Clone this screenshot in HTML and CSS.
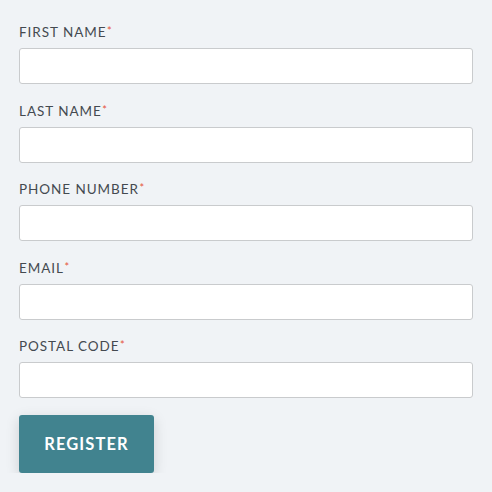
FILE: index.html
```html
<!DOCTYPE html>
<html>
<head>
<meta charset="utf-8">
<link rel="stylesheet" href="styles.css">
</head>
<body>
<form class="form">
  <div class="field">
    <label class="label">FIRST NAME<span class="req">*</span></label>
    <input class="input" type="text">
  </div>
  <div class="field">
    <label class="label">LAST NAME<span class="req">*</span></label>
    <input class="input" type="text">
  </div>
  <div class="field">
    <label class="label">PHONE NUMBER<span class="req">*</span></label>
    <input class="input" type="text">
  </div>
  <div class="field">
    <label class="label">EMAIL<span class="req">*</span></label>
    <input class="input" type="text">
  </div>
  <div class="field">
    <label class="label">POSTAL CODE<span class="req">*</span></label>
    <input class="input" type="text">
  </div>
  <button class="btn" type="button">REGISTER</button>
</form>
</body>
</html>
```
FILE: styles.css
```css
html, body {
  margin: 0;
  padding: 0;
  background: #f0f3f6;
}
body {
  font-family: Lato, "Open Sans", sans-serif;
}
.form {
  padding: 22px 19px 0 19px;
  width: 454px;
}
.field {
  margin-bottom: 16.5px;
}
.label {
  display: block;
  font-size: 13.5px;
  line-height: 20px;
  height: 20px;
  letter-spacing: 0.95px;
  color: #444a50;
  margin-bottom: 6px;
}
.req {
  color: #e5533c;
  font-size: 11px;
  vertical-align: 2px;
  line-height: 1;
  letter-spacing: 0;
  margin-left: 0.5px;
}
.input {
  display: block;
  box-sizing: border-box;
  width: 454px;
  height: 36px;
  border: 1px solid #c9cbcd;
  border-radius: 3px;
  background: #fff;
  margin: 0;
}
.btn {
  margin-top: 0;
  width: 135px;
  height: 58px;
  border: none;
  border-radius: 3px;
  background: #41838f;
  color: #fff;
  font-family: Lato, sans-serif;
  font-weight: 700;
  font-size: 16.5px;
  letter-spacing: 1.1px;
  box-shadow: 0 4px 14px rgba(0,0,0,0.15);
  padding: 0;
}
```
